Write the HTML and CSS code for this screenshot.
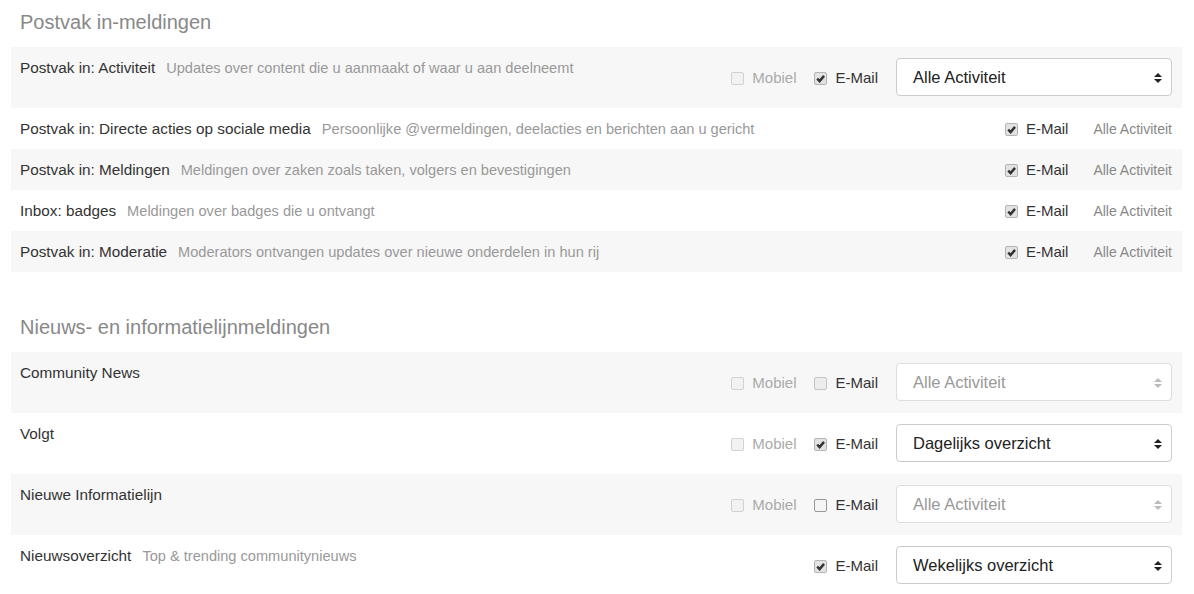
FILE: index.html
```html
<!DOCTYPE html>
<html lang="nl">
<head>
    <meta charset="UTF-8">
    <meta name="viewport" content="width=device-width, initial-scale=1.0">
    <title>Meldingsinstellingen</title>
    <link rel="stylesheet" href="styles.css">
</head>
<body>
    <div class="settings">

        <h2 class="section-title">Postvak in-meldingen</h2>
        <div class="rows">
            <div class="row">
                <div class="row-label"><span class="name">Postvak in: Activiteit</span><span class="desc">Updates over content die u aanmaakt of waar u aan deelneemt</span></div>
                <div class="row-opts">
                    <span class="opt off"><span class="cb"></span>Mobiel</span>
                    <span class="opt"><span class="cb on"><svg viewBox="0 0 10 10"><path d="M2 5.2 L4.2 7.4 L8.2 2.6"/></svg></span>E-Mail</span>
                    <div class="select">Alle Activiteit<span class="arrows"><i class="up"></i><i class="down"></i></span></div>
                </div>
            </div>
            <div class="row">
                <div class="row-label"><span class="name">Postvak in: Directe acties op sociale media</span><span class="desc">Persoonlijke @vermeldingen, deelacties en berichten aan u gericht</span></div>
                <div class="row-opts">
                    <span class="opt"><span class="cb on"><svg viewBox="0 0 10 10"><path d="M2 5.2 L4.2 7.4 L8.2 2.6"/></svg></span>E-Mail</span>
                    <span class="freq">Alle Activiteit</span>
                </div>
            </div>
            <div class="row">
                <div class="row-label"><span class="name">Postvak in: Meldingen</span><span class="desc">Meldingen over zaken zoals taken, volgers en bevestigingen</span></div>
                <div class="row-opts">
                    <span class="opt"><span class="cb on"><svg viewBox="0 0 10 10"><path d="M2 5.2 L4.2 7.4 L8.2 2.6"/></svg></span>E-Mail</span>
                    <span class="freq">Alle Activiteit</span>
                </div>
            </div>
            <div class="row">
                <div class="row-label"><span class="name">Inbox: badges</span><span class="desc">Meldingen over badges die u ontvangt</span></div>
                <div class="row-opts">
                    <span class="opt"><span class="cb on"><svg viewBox="0 0 10 10"><path d="M2 5.2 L4.2 7.4 L8.2 2.6"/></svg></span>E-Mail</span>
                    <span class="freq">Alle Activiteit</span>
                </div>
            </div>
            <div class="row">
                <div class="row-label"><span class="name">Postvak in: Moderatie</span><span class="desc">Moderators ontvangen updates over nieuwe onderdelen in hun rij</span></div>
                <div class="row-opts">
                    <span class="opt"><span class="cb on"><svg viewBox="0 0 10 10"><path d="M2 5.2 L4.2 7.4 L8.2 2.6"/></svg></span>E-Mail</span>
                    <span class="freq">Alle Activiteit</span>
                </div>
            </div>
        </div>

        <h2 class="section-title second">Nieuws- en informatielijnmeldingen</h2>
        <div class="rows">
            <div class="row">
                <div class="row-label"><span class="name">Community News</span></div>
                <div class="row-opts">
                    <span class="opt off"><span class="cb"></span>Mobiel</span>
                    <span class="opt"><span class="cb empty"></span>E-Mail</span>
                    <div class="select disabled">Alle Activiteit<span class="arrows"><i class="up"></i><i class="down"></i></span></div>
                </div>
            </div>
            <div class="row">
                <div class="row-label"><span class="name">Volgt</span></div>
                <div class="row-opts">
                    <span class="opt off"><span class="cb"></span>Mobiel</span>
                    <span class="opt"><span class="cb on"><svg viewBox="0 0 10 10"><path d="M2 5.2 L4.2 7.4 L8.2 2.6"/></svg></span>E-Mail</span>
                    <div class="select">Dagelijks overzicht<span class="arrows"><i class="up"></i><i class="down"></i></span></div>
                </div>
            </div>
            <div class="row">
                <div class="row-label"><span class="name">Nieuwe Informatielijn</span></div>
                <div class="row-opts">
                    <span class="opt off"><span class="cb"></span>Mobiel</span>
                    <span class="opt"><span class="cb open"></span>E-Mail</span>
                    <div class="select disabled">Alle Activiteit<span class="arrows"><i class="up"></i><i class="down"></i></span></div>
                </div>
            </div>
            <div class="row">
                <div class="row-label"><span class="name">Nieuwsoverzicht</span><span class="desc">Top &amp; trending communitynieuws</span></div>
                <div class="row-opts">
                    <span class="opt"><span class="cb on"><svg viewBox="0 0 10 10"><path d="M2 5.2 L4.2 7.4 L8.2 2.6"/></svg></span>E-Mail</span>
                    <div class="select">Wekelijks overzicht<span class="arrows"><i class="up"></i><i class="down"></i></span></div>
                </div>
            </div>
        </div>

    </div>
</body>
</html>
```

FILE: styles.css
```css
body {
    margin: 0;
    font-family: "Liberation Sans", Arial, sans-serif;
    font-size: 14px;
    color: #333;
    background: #fff;
}
.settings {
    padding: 0 12px 0 11px;
}
.section-title {
    margin: 0;
    padding: 10px 9px 13px;
    font-size: 20px;
    font-weight: normal;
    line-height: 24px;
    color: #888;
}
.section-title.second {
    padding-top: 43px;
}
.row {
    display: flex;
    justify-content: space-between;
    padding: 11px 10px 10px 9px;
    line-height: 20px;
}
.rows .row:nth-child(odd) {
    background: #f7f7f7;
}
.row-label {
    align-self: flex-start;
    white-space: nowrap;
}
.name {
    font-size: 15.3px;
    color: #333;
}
.desc {
    margin-left: 11px;
    font-size: 14.6px;
    color: #999;
}
.row-opts {
    display: flex;
    align-items: center;
    flex-shrink: 0;
}
.opt {
    display: flex;
    align-items: center;
    margin-right: 18px;
    font-size: 15px;
    color: #333;
}
.opt.off {
    color: #aaa;
}
.cb {
    box-sizing: border-box;
    width: 13px;
    height: 13px;
    margin-right: 8px;
    border: 1px solid #d2d2d2;
    border-radius: 2px;
    background: #f2f2f2;
}
.cb.on {
    border-color: #b4b4b4;
    background: #e2e2e2;
}
.cb.empty {
    background: #ececec;
    border-color: #c4c4c4;
}
.cb.open {
    border-color: #999;
    background: #f4f4f4;
}
.cb svg {
    display: block;
    width: 11px;
    height: 11px;
}
.cb svg path {
    fill: none;
    stroke: #333;
    stroke-width: 2.2;
}
.freq {
    margin-left: 7px;
    font-size: 14px;
    color: #888;
}
.select {
    position: relative;
    box-sizing: border-box;
    width: 276px;
    height: 38px;
    margin: 0 0 2px;
    padding: 0 16px;
    border: 1px solid #ccc;
    border-radius: 4px;
    background: #fff;
    font-size: 16.5px;
    line-height: 36px;
    color: #222;
}
.select.disabled {
    color: #999;
    border-color: #ddd;
}
.arrows {
    position: absolute;
    right: 9px;
    top: 14px;
    display: flex;
    flex-direction: column;
    gap: 2px;
}
.arrows i {
    width: 0;
    height: 0;
    border-left: 4px solid transparent;
    border-right: 4px solid transparent;
}
.arrows .up {
    border-bottom: 4px solid #222;
}
.arrows .down {
    border-top: 4px solid #222;
}
.select.disabled .up {
    border-bottom-color: #bbb;
}
.select.disabled .down {
    border-top-color: #bbb;
}
```
